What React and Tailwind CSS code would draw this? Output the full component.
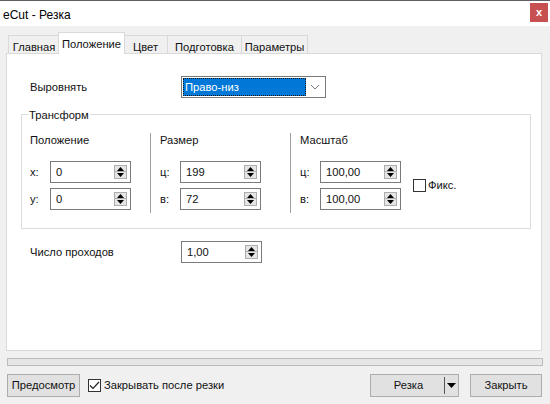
import { useState } from "react";

const TABS = [
  { label: "Главная", w: "w-[52px]" },
  { label: "Положение", w: "w-[67px]" },
  { label: "Цвет", w: "w-[45px]" },
  { label: "Подготовка", w: "w-[74px]" },
  { label: "Параметры", w: "w-[66px]" },
];

function Spinner() {
  return (
    <div className="flex flex-col gap-0 w-[13px]">
      <div className="h-[7px] bg-[#e5e5e5] border border-[#adadad] flex items-center justify-center">
        <svg width="7" height="4" viewBox="0 0 7 4"><path d="M3.5 0L7 4H0z" fill="#000" /></svg>
      </div>
      <div className="h-[7px] bg-[#e5e5e5] border border-[#adadad] border-t-0 flex items-center justify-center">
        <svg width="7" height="4" viewBox="0 0 7 4"><path d="M0 0h7L3.5 4z" fill="#000" /></svg>
      </div>
    </div>
  );
}

function SpinInput({ value, w = "w-[81px]" }) {
  return (
    <div className={`${w} h-[22px] bg-white border border-[#7a7a7a] flex items-center justify-between pl-[5px] pr-[3px]`}>
      <span>{value}</span>
      <Spinner />
    </div>
  );
}

function Field({ label, value }) {
  return (
    <div className="flex items-center">
      <span className="w-[20px]">{label}</span>
      <SpinInput value={value} />
    </div>
  );
}

export default function App() {
  const [tab] = useState(1);

  return (
    <div className="w-[550px] h-[404px] bg-[#f0f0f0] text-[11.2px] text-[#111] font-['Liberation_Sans',Arial,sans-serif] overflow-hidden">
      {/* Title bar */}
      <div className="h-[26px] bg-white border-t border-[#5f5f5f] flex items-start justify-between">
        <span className="pl-[3px] pt-[5px] text-[12px] text-black">eCut - Резка</span>
        <div className="mt-[2px] mr-[2px] w-[18px] h-[19px] bg-[#c75050] flex items-center justify-center text-white font-bold text-[11px] leading-none">
          x
        </div>
      </div>

      {/* Tabs */}
      <div className="h-[27px] flex items-end pl-[8px]">
        {TABS.map((t, i) =>
          i === tab ? (
            <div
              key={t.label}
              className={`${t.w} h-[22px] -mx-[2px] -mb-px z-10 relative bg-white border border-b-0 border-[#d9d9d9] flex items-start justify-center pt-[3px] px-[2px]`}
            >
              {t.label}
            </div>
          ) : (
            <div
              key={t.label}
              className={`${t.w} h-[18px] bg-[#f0f0f0] border border-b-0 border-[#d9d9d9] flex items-start justify-center pt-[3px] ${i > 0 && i - 1 !== tab ? "border-l-0" : ""}`}
            >
              {t.label}
            </div>
          )
        )}
      </div>

      {/* Panel */}
      <div className="ml-[6px] w-[536px] h-[298px] bg-white border border-[#d9d9d9] pl-[23px] pt-[22px]">
        <div className="flex items-center">
          <span className="w-[151px]">Выровнять</span>
          <div className="w-[145px] h-[22px] border border-[#7a7a7a] flex items-center p-[1px]">
            <div className="w-[123px] h-[18px] bg-[#0078d7] border border-dotted border-[#1a1a1a] text-white flex items-center pl-[1px]">
              Право-низ
            </div>
            <div className="flex-1 flex items-center justify-center">
              <svg width="10" height="6" viewBox="0 0 10 6"><path d="M1 1l4 4 4-4" fill="none" stroke="#7a7a7a" strokeWidth="1" /></svg>
            </div>
          </div>
        </div>

        {/* Group box */}
        <div className="relative -ml-[9px] mt-[16px] w-[510px] h-[115px] border border-[#dcdcdc] pl-[8px] pt-[18px]">
          <span className="absolute -top-[8px] left-[6px] bg-white px-[1px]">Трансформ</span>
          <div className="flex">
            <div className="w-[120px] h-[80px] flex flex-col">
              <div className="h-[14px] leading-[14px]">Положение</div>
              <div className="mt-[14px] flex flex-col gap-[5px]">
                <Field label="x:" value="0" />
                <Field label="y:" value="0" />
              </div>
            </div>
            <div className="w-[140px] h-[80px] border-l border-[#a0a0a0] pl-[9px] flex flex-col">
              <div className="h-[14px] leading-[14px]">Размер</div>
              <div className="mt-[14px] flex flex-col gap-[5px]">
                <Field label="ц:" value="199" />
                <Field label="в:" value="72" />
              </div>
            </div>
            <div className="h-[80px] border-l border-[#a0a0a0] pl-[9px] flex flex-col">
              <div className="h-[14px] leading-[14px]">Масштаб</div>
              <div className="mt-[14px] flex items-center">
                <div className="flex flex-col gap-[5px]">
                  <Field label="ц:" value="100,00" />
                  <Field label="в:" value="100,00" />
                </div>
                <div className="ml-[12px] flex items-center gap-[2px]">
                  <div className="w-[13px] h-[13px] border border-[#333] bg-white" />
                  <span>Фикс.</span>
                </div>
              </div>
            </div>
          </div>
        </div>

        <div className="mt-[12px] flex items-center">
          <span className="w-[151px]">Число проходов</span>
          <SpinInput value="1,00" />
        </div>
      </div>

      {/* Progress */}
      <div className="ml-[7px] mt-[7px] w-[536px] h-[8px] bg-[#e6e6e6] border border-[#bcbcbc]" />

      {/* Bottom buttons */}
      <div className="mt-[8px] pl-[7px] pr-[8px] flex items-center">
        <div className="w-[73px] h-[23px] bg-[#e1e1e1] border border-[#adadad] flex items-center justify-center">
          Предосмотр
        </div>
        <div className="ml-[8px] flex items-center gap-[3px]">
          <div className="w-[13px] h-[13px] border border-[#333] bg-white flex items-center justify-center">
            <svg width="11" height="9" viewBox="0 0 11 9"><path d="M1 4.5l3 3 6-6.5" fill="none" stroke="#222" strokeWidth="1.2" /></svg>
          </div>
          <span>Закрывать после резки</span>
        </div>
        <div className="ml-auto w-[89px] h-[23px] bg-[#e1e1e1] border border-[#adadad] flex items-center">
          <span className="flex-1 text-center pl-[2px]">Резка</span>
          <div className="w-px h-[17px] bg-[#555]" />
          <svg className="mx-[2px]" width="9" height="5" viewBox="0 0 9 5"><path d="M0 0h9L4.5 5z" fill="#000" /></svg>
        </div>
        <div className="ml-[11px] w-[72px] h-[23px] bg-[#e1e1e1] border border-[#adadad] flex items-center justify-center">
          Закрыть
        </div>
      </div>
    </div>
  );
}
